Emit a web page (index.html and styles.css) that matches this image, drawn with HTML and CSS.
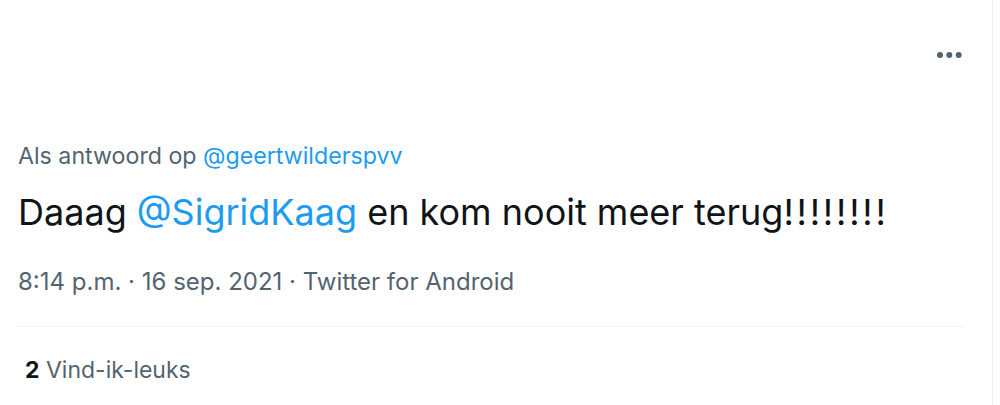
FILE: index.html
```html
<!DOCTYPE html>
<html lang="nl">
<head>
<meta charset="utf-8">
<link rel="stylesheet" href="styles.css">
</head>
<body>
<div class="column">
  <article class="tweet">
    <div class="top">
      <button class="more" aria-label="Meer">
        <svg width="25" height="6" viewBox="0 0 25 6"><circle cx="3" cy="3" r="3"/><circle cx="12.3" cy="3" r="3"/><circle cx="21.7" cy="3" r="3"/></svg>
      </button>
    </div>
    <div class="reply">Als antwoord op <a class="link">@geertwilderspvv</a></div>
    <div class="text">Daaag <a class="link">@SigridKaag</a> en kom nooit meer terug<span class="bang">!!!!!!!!</span></div>
    <div class="meta">8:14 p.m. · 16 sep. 2021 · Twitter for Android</div>
    <div class="stats"><span class="num">2</span> Vind-ik-leuks</div>
  </article>
</div>
</body>
</html>
```
FILE: styles.css
```css
* { box-sizing: border-box; }
html, body { margin: 0; background: #fff; }
body { font-family: Inter, "Noto Sans", sans-serif; color: #0f1419; }
.column {
  width: 993px;
  height: 405px;
  border-right: 1px solid #eff3f4;
}
.tweet { padding: 0 28px 0 18px; }
.top {
  height: 141px;
  display: flex;
  justify-content: flex-end;
  align-items: flex-start;
  padding-top: 52px;
}
.more {
  border: 0; background: none; padding: 0; margin-right: 2px;
  display: flex; fill: #536471;
}
.reply { font-size: 23.2px; line-height: 30px; color: #536471; }
.link { color: #1d9bf0; text-decoration: none; }
.text { font-size: 36px; line-height: 46px; margin-top: 18px; }
.bang { letter-spacing: 2.8px; }
.meta { font-size: 24px; line-height: 32px; color: #536471; margin-top: 31px; padding-bottom: 28px; border-bottom: 1px solid #eff3f4; }
.stats { font-size: 23px; line-height: 30px; color: #536471; padding: 28px 0 0 7px; }
.num { color: #0f1419; font-weight: 700; }
```
